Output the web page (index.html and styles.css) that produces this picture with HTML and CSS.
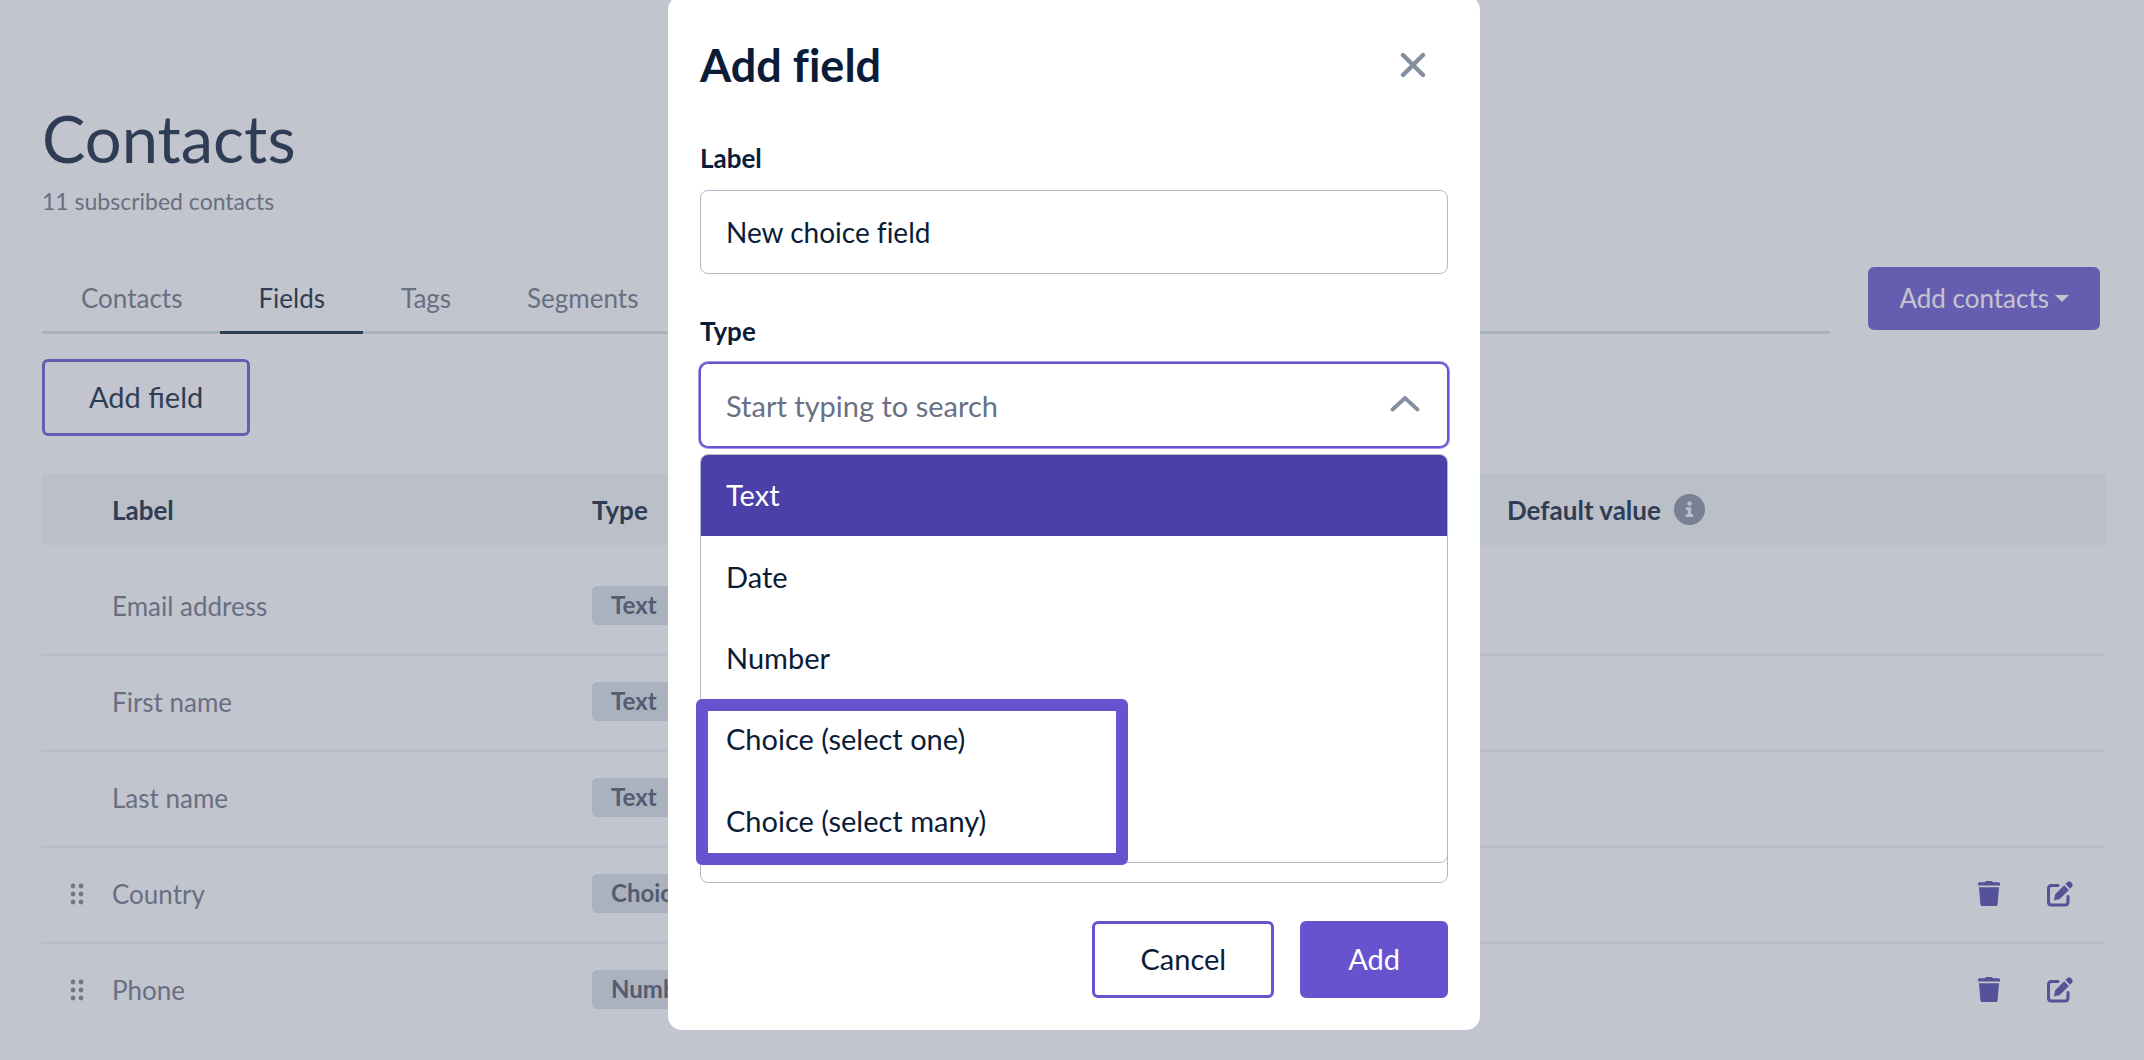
FILE: index.html
```html
<!DOCTYPE html>
<html lang="en">
<head>
  <meta charset="utf-8">
  <meta name="viewport" content="width=device-width, initial-scale=1">
  <title>Contacts</title>
  <link rel="stylesheet" href="styles.css">
</head>
<body>
  <svg width="0" height="0" class="sprite" aria-hidden="true">
    <symbol id="grip" viewBox="0 0 14 22">
      <circle cx="3" cy="3" r="2.4"/><circle cx="11" cy="3" r="2.4"/>
      <circle cx="3" cy="11" r="2.4"/><circle cx="11" cy="11" r="2.4"/>
      <circle cx="3" cy="19" r="2.4"/><circle cx="11" cy="19" r="2.4"/>
    </symbol>
    <symbol id="trash" viewBox="0 0 22 25">
      <path d="M7 1.2Q7.6 0 9 0h4q1.400 0 2 1.200h5.500Q22 1.200 22 2.400V4.600H0V2.400Q0 1.200 1.500 1.200zM1 6.200h20L19.600 23.600Q19.400 25 18 25H4Q2.600 25 2.400 23.600z"/>
    </symbol>
    <symbol id="edit" viewBox="0 0 26 26">
      <path d="M11 4.500H4.500Q1.500 4.500 1.500 7.500V21Q1.500 24 4.500 24H18Q21 24 21 21V15.500" fill="none" stroke="currentColor" stroke-width="3" stroke-linecap="round"/>
      <path d="M17.200 4.300L21.900 9L12.800 18L6.900 19.500L8.200 13.300zM18.400 3.100L20.200 1.200Q22.200-.6 24.300 1.500Q26.600 3.800 24.900 5.900L23.100 7.800z"/>
    </symbol>
  </svg>

  <main class="page">
    <h1 class="page-title">Contacts</h1>
    <p class="page-subtitle">11 subscribed contacts</p>

    <div class="tab-row">
      <nav class="tabs">
        <a class="tab" href="#contacts">Contacts</a>
        <a class="tab tab-active" href="#fields" aria-current="page">Fields</a>
        <a class="tab" href="#tags">Tags</a>
        <a class="tab" href="#segments">Segments</a>
      </nav>
      <button class="btn btn-menu" type="button">Add contacts<span class="caret"></span></button>
    </div>

    <button class="btn btn-outline" type="button">Add field</button>

    <table class="fields-table">
      <colgroup>
        <col class="col-grip"><col class="col-label"><col class="col-type"><col class="col-default"><col class="col-actions">
      </colgroup>
      <thead>
        <tr>
          <th></th>
          <th scope="col">Label</th>
          <th scope="col">Type</th>
          <th scope="col">
            <span class="th-info">Default value
              <svg class="info" viewBox="0 0 31 31" aria-hidden="true"><circle cx="15.500" cy="15.500" r="15.500" fill="#838e9e"/><circle cx="15.500" cy="9.500" r="2.200" fill="#f3f5f7"/><path d="M12 13.300h5.200v7h2v2.700h-7.600v-2.700h2.200v-4.300H12z" fill="#f3f5f7"/></svg>
            </span>
          </th>
          <th></th>
        </tr>
      </thead>
      <tbody>
        <tr><td></td><td>Email address</td><td><span class="badge">Text</span></td><td></td><td></td></tr>
        <tr><td></td><td>First name</td><td><span class="badge">Text</span></td><td></td><td></td></tr>
        <tr><td></td><td>Last name</td><td><span class="badge">Text</span></td><td></td><td></td></tr>
        <tr>
          <td><svg class="grip"><use href="#grip"/></svg></td>
          <td>Country</td><td><span class="badge">Choice</span></td><td></td>
          <td><div class="actions">
            <button class="icon-btn" type="button" aria-label="Delete"><svg class="trash"><use href="#trash"/></svg></button>
            <button class="icon-btn" type="button" aria-label="Edit"><svg class="edit"><use href="#edit"/></svg></button>
          </div></td>
        </tr>
        <tr>
          <td><svg class="grip"><use href="#grip"/></svg></td>
          <td>Phone</td><td><span class="badge">Number</span></td><td></td>
          <td><div class="actions">
            <button class="icon-btn" type="button" aria-label="Delete"><svg class="trash"><use href="#trash"/></svg></button>
            <button class="icon-btn" type="button" aria-label="Edit"><svg class="edit"><use href="#edit"/></svg></button>
          </div></td>
        </tr>
      </tbody>
    </table>
  </main>

  <div class="overlay">
    <form class="modal" role="dialog" aria-labelledby="modal-title">
      <header class="modal-header">
        <h2 class="modal-title" id="modal-title">Add field</h2>
        <button class="close" type="button" aria-label="Close">
          <svg viewBox="0 0 26 26"><path d="M3 3L23 23M23 3L3 23" fill="none" stroke="currentColor" stroke-width="4.400" stroke-linecap="round"/></svg>
        </button>
      </header>

      <div class="field">
        <label for="field-label">Label</label>
        <input class="input" id="field-label" type="text" value="New choice field">
      </div>

      <div class="field">
        <label for="field-type">Type</label>
        <div class="combo">
          <input class="input input-focus" id="field-type" type="text" role="combobox" aria-expanded="true" aria-controls="type-list" placeholder="Start typing to search">
          <svg class="chevron" viewBox="0 0 30 18"><path d="M2.500 14.500L15 3L27.500 14.500" fill="none" stroke="currentColor" stroke-width="3.800" stroke-linecap="round"/></svg>
          <ul class="listbox" id="type-list" role="listbox">
            <li class="option option-active" role="option" aria-selected="true">Text</li>
            <li class="option" role="option">Date</li>
            <li class="option" role="option">Number</li>
            <li class="option" role="option">Choice (select one)</li>
            <li class="option" role="option">Choice (select many)</li>
          </ul>
          <div class="callout"></div>
        </div>
      </div>

      <div class="panel"></div>

      <footer class="modal-footer">
        <button class="btn btn-outline" type="button">Cancel</button>
        <button class="btn btn-primary" type="submit">Add</button>
      </footer>
    </form>
  </div>
</body>
</html>
```
FILE: styles.css
```css
:root {
  --ink: #0b1c38;
  --muted: #697184;
  --purple: #6853cf;
  --purple-dark: #4a40a8;
  --line: #b0b9c8;
  --gray: #838e9e;
}

* { box-sizing: border-box; }

body {
  margin: 0;
  background: #fff;
  color: var(--ink);
  font-family: Lato, "Liberation Sans", sans-serif;
  font-size: 26px;
  line-height: 32px;
}

button, input { font: inherit; color: inherit; }

.sprite { position: absolute; }

.page { padding: 100px 38px 0 42px; }

.page-title {
  margin: 0;
  font-size: 65px;
  line-height: 76px;
  font-weight: 400;
}

.page-subtitle {
  margin: 9px 0 50px;
  font-size: 23px;
  color: var(--muted);
}

.tab-row {
  display: flex;
  align-items: flex-start;
  gap: 38px;
  padding-right: 6px;
  margin-bottom: 25px;
}

.tabs {
  flex: 1;
  display: flex;
  padding-left: 1px;
  box-shadow: inset 0 -3px #d2e1dc;
}

.tab {
  padding: 15px 38px 17px;
  border-bottom: 3px solid transparent;
  color: var(--muted);
  text-decoration: none;
}

.tab-active {
  color: var(--ink);
  border-color: var(--ink);
}

.btn {
  border: 3px solid var(--purple);
  border-radius: 6px;
  padding: 19px 44px 20px;
  background: var(--purple);
  color: #fff;
  font-size: 29px;
}

.btn-outline {
  background: transparent;
  color: var(--ink);
}

.btn-menu {
  display: flex;
  align-items: center;
  gap: 6px;
  padding: 12px 28px 13px;
  font-size: 26px;
}

.caret {
  border: 7px solid transparent;
  border-top-color: currentColor;
  border-bottom: 0;
}

.fields-table {
  width: 100%;
  margin-top: 38px;
  table-layout: fixed;
  border-collapse: separate;
  border-spacing: 0;
}

.col-grip { width: 70px; }
.col-label { width: 480px; }
.col-type { width: 915px; }
.col-actions { width: 160px; }

.fields-table th {
  height: 71px;
  padding: 0;
  background: #f3f5f7;
  text-align: left;
  font-weight: 700;
}

.th-info {
  display: flex;
  align-items: center;
  gap: 13px;
}

.info { width: 31px; height: 31px; }

.fields-table tbody::before {
  content: "";
  display: table-row;
  height: 15px;
}

.fields-table td {
  height: 96px;
  padding: 0 0 3px;
  border-bottom: 2px solid #eff1f6;
  color: var(--muted);
}

.fields-table tr:last-child td { border-color: transparent; }

.badge {
  display: inline-block;
  padding: 3px 19px 4px;
  border-radius: 5px;
  background: #d8dfe9;
  color: #49515f;
  font-size: 24px;
  font-weight: 700;
}

.grip {
  display: block;
  width: 14px;
  height: 22px;
  margin-left: 28px;
  fill: #738293;
}

.actions {
  display: flex;
  justify-content: flex-end;
  align-items: center;
  gap: 47px;
  padding-right: 33px;
}

.icon-btn {
  display: flex;
  padding: 0;
  border: 0;
  background: none;
  color: var(--purple-dark);
  fill: currentColor;
}

.trash { width: 22px; height: 25px; }
.edit { width: 26px; height: 26px; }

.overlay {
  position: fixed;
  inset: 0;
  display: flex;
  justify-content: center;
  align-items: flex-start;
  padding-left: 4px;
  background: rgba(102, 110, 130, .4);
}

.modal {
  width: 812px;
  margin-top: -4px;
  padding: 40px 32px 32px;
  border-radius: 14px;
  background: #fff;
  font-variant-ligatures: none;
}

.modal-header {
  display: flex;
  justify-content: space-between;
  align-items: center;
  margin-bottom: 48px;
  padding-right: 22px;
}

.modal-title {
  margin: 0;
  font-size: 45px;
  line-height: 58px;
  font-weight: 700;
}

.close {
  display: flex;
  padding: 0;
  border: 0;
  background: none;
  color: var(--gray);
}

.close svg { width: 26px; height: 26px; }

.field {
  display: flex;
  flex-direction: column;
  gap: 16px;
  margin-bottom: 41px;
}

.field label { font-weight: 700; }

.input {
  display: block;
  width: 100%;
  height: 84px;
  padding: 0 25px;
  border: 1px solid var(--line);
  border-radius: 8px;
  background: #fff;
  font-size: 28px;
  outline: 0;
}

.input-focus {
  border-color: var(--purple);
  box-shadow: 0 0 0 1px var(--purple), 0 0 0 2px rgba(104, 83, 207, .6);
  font-size: 29px;
}

.input::placeholder { color: var(--muted); opacity: 1; }

.combo { position: relative; }

.chevron {
  position: absolute;
  top: 32px;
  right: 28px;
  width: 30px;
  height: 18px;
  color: var(--gray);
}

.listbox {
  position: absolute;
  top: calc(100% + 7px);
  left: 0;
  right: 0;
  display: grid;
  grid-auto-rows: 1fr;
  height: 409px;
  margin: 0;
  padding: 0;
  overflow: hidden;
  border: 1px solid var(--line);
  border-radius: 8px;
  background: #fff;
  list-style: none;
  font-size: 29px;
}

.option {
  display: flex;
  align-items: center;
  padding: 0 25px 1px;
}

.option-active {
  background: var(--purple-dark);
  color: #fff;
}

/* Frame around the two choice options */
.callout {
  position: absolute;
  top: 336px;
  left: -4px;
  width: 432px;
  height: 166px;
  border: 12px solid var(--purple);
  border-radius: 6px;
}

.panel {
  height: 412px;
  margin-top: -17px;
  border: 1px solid var(--line);
  border-radius: 8px;
}

.modal-footer {
  display: flex;
  justify-content: flex-end;
  gap: 26px;
  margin-top: 38px;
}

.modal-footer .btn { padding-inline: 45px; }
```
